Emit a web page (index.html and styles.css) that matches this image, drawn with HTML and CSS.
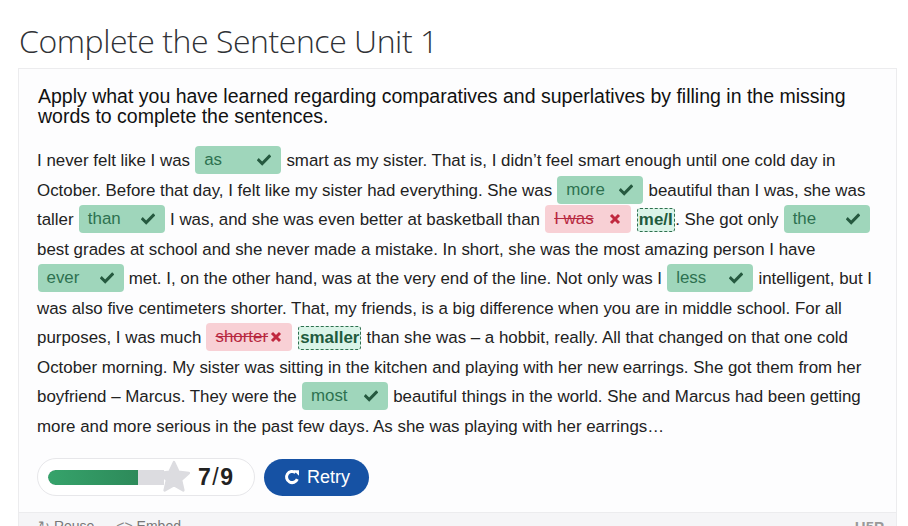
FILE: index.html
```html
<!DOCTYPE html>
<html lang="en">
<head>
<meta charset="utf-8">
<title>Complete the Sentence Unit 1</title>
<link rel="stylesheet" href="styles.css">
</head>
<body>
<h1 class="title">Complete the Sentence Unit 1</h1>
<div class="card">
  <div class="content">
    <div class="intro">Apply what you have learned regarding comparatives and superlatives by filling in the missing words to complete the sentences.</div>
    <p class="text">I never felt like I was <span class="drop ok"><span class="w">as</span><svg class="ic-check" viewBox="0 0 14 12"><polyline points="1.8,6.2 5.2,9.6 12.2,2.4"/></svg></span> smart as my sister. That is, I didn’t feel smart enough until one cold day in October. Before that day, I felt like my sister had everything. She was <span class="drop ok"><span class="w">more</span><svg class="ic-check" viewBox="0 0 14 12"><polyline points="1.8,6.2 5.2,9.6 12.2,2.4"/></svg></span> beautiful than I was, she was taller <span class="drop ok"><span class="w">than</span><svg class="ic-check" viewBox="0 0 14 12"><polyline points="1.8,6.2 5.2,9.6 12.2,2.4"/></svg></span> I was, and she was even better at basketball than <span class="drop bad"><span class="w">I was</span><svg class="ic-x" viewBox="0 0 12 12"><path d="M2 2 L10 10 M10 2 L2 10"/></svg></span> <span class="sol">me/I</span>. She got only <span class="drop ok"><span class="w">the</span><svg class="ic-check" viewBox="0 0 14 12"><polyline points="1.8,6.2 5.2,9.6 12.2,2.4"/></svg></span> best grades at school and she never made a mistake. In short, she was the most amazing person I have <span class="drop ok"><span class="w">ever</span><svg class="ic-check" viewBox="0 0 14 12"><polyline points="1.8,6.2 5.2,9.6 12.2,2.4"/></svg></span> met. I, on the other hand, was at the very end of the line. Not only was I <span class="drop ok"><span class="w">less</span><svg class="ic-check" viewBox="0 0 14 12"><polyline points="1.8,6.2 5.2,9.6 12.2,2.4"/></svg></span> intelligent, but I was also five centimeters shorter. That, my friends, is a big difference when you are in middle school. For all purposes, I was much <span class="drop bad"><span class="w">shorter</span><svg class="ic-x" viewBox="0 0 12 12"><path d="M2 2 L10 10 M10 2 L2 10"/></svg></span> <span class="sol">smaller</span> than she was – a hobbit, really. All that changed on that one cold October morning. My sister was sitting in the kitchen and playing with her new earrings. She got them from her boyfriend – Marcus. They were the <span class="drop ok"><span class="w">most</span><svg class="ic-check" viewBox="0 0 14 12"><polyline points="1.8,6.2 5.2,9.6 12.2,2.4"/></svg></span> beautiful things in the world. She and Marcus had been getting more and more serious in the past few days. As she was playing with her earrings…</p>
    <div class="actions">
      <div class="score">
        <div class="bar"><div class="fill" style="width:78%"></div></div>
        <svg class="star" viewBox="0 0 34 34"><polygon points="17,3 21.2,12.2 31,13.2 23.6,19.8 25.8,29.6 17,24.6 8.2,29.6 10.4,19.8 3,13.2 12.8,12.2"/></svg>
        <span class="num">7<span class="sl">/</span>9</span>
      </div>
      <button class="retry"><svg class="ic-redo" viewBox="0 0 16 16"><path class="arc" d="M13.3 10.2 A5.6 5.6 0 1 1 11.6 3.6"/><polygon points="9.4,1.2 15,1.2 15,6.8"/></svg>Retry</button>
    </div>
  </div>
  <div class="footer">
    <span class="fl"><span class="fi">↻</span> Reuse</span>
    <span class="fl"><span class="fi">&lt;&gt;</span> Embed</span>
    <span class="logo">H5P</span>
  </div>
</div>
</body>
</html>
```

FILE: styles.css
```css
html, body {
  margin: 0;
  padding: 0;
  background: #ffffff;
}
body {
  font-family: "Liberation Sans", Arial, sans-serif;
  color: #222;
  overflow: hidden;
}
.title {
  font-family: "Open Sans", "Liberation Sans", sans-serif;
  font-weight: 300;
  font-size: 32px;
  line-height: 40px;
  color: #303236;
  margin: 21px 0 7px 19px;
  letter-spacing: -0.45px;
}
.card {
  margin-left: 18px;
  width: 877px;
  border: 1px solid #ececee;
  background: #fdfdfe;
}
.content {
  padding: 18px 18px 16px 18px;
}
.intro {
  font-size: 19.5px;
  line-height: 19.5px;
  color: #111;
  margin-left: 1px;
}
.text {
  font-size: 16.9px;
  line-height: 29.5px;
  color: #222;
  margin: 20px 0 0 0;
}
.drop {
  display: inline-flex;
  align-items: center;
  justify-content: space-between;
  box-sizing: border-box;
  width: 86px;
  height: 28px;
  padding: 0 10px 0 9px;
  border-radius: 4px;
  vertical-align: middle;
  margin: -3px 0.5px 0 0.5px;
  line-height: 28px;
}
.drop.ok {
  background: #9fd6bb;
  color: #2d7150;
}
.drop.bad {
  background: #f8d0d5;
  color: #b72840;
}
.drop.bad .w {
  text-decoration: line-through;
}
.ic-check {
  width: 14px;
  height: 12px;
  fill: none;
  stroke: #25593f;
  stroke-width: 3;
  stroke-linecap: square;
}
.ic-x {
  width: 12px;
  height: 12px;
  fill: none;
  stroke: #c0283f;
  stroke-width: 3;
}
.sol {
  display: inline-block;
  border: 1px dashed #2d6f4e;
  border-radius: 3px;
  background: #daf4e8;
  color: #1f5a3d;
  font-weight: bold;
  padding: 0 1px;
  line-height: 22px;
  margin: 0 0.5px;
}
.actions {
  display: flex;
  align-items: center;
  gap: 9px;
  margin-top: 17px;
}
.score {
  display: flex;
  align-items: center;
  box-sizing: border-box;
  width: 218px;
  height: 38px;
  border: 1px solid #e7e7ea;
  border-radius: 19px;
  background: #fff;
  padding: 0 0 0 10px;
}
.bar {
  width: 116px;
  height: 15px;
  background: #dcdce0;
  border-radius: 8px 0 0 8px;
  overflow: hidden;
}
.fill {
  height: 100%;
  background: linear-gradient(90deg, #36a36b, #2d8a5a);
  border-radius: 8px 0 0 8px;
}
.star {
  width: 36px;
  height: 36px;
  margin-left: -8px;
  fill: #dcdce0;
  stroke: #dcdce0;
  stroke-width: 2.5;
  stroke-linejoin: round;
}
.num {
  font-size: 23px;
  font-weight: bold;
  color: #222;
  margin-left: 6px;
  letter-spacing: 0.5px;
}
.sl {
  font-weight: normal;
  margin: 0 1px;
}
.retry {
  display: inline-flex;
  align-items: center;
  gap: 7px;
  height: 37px;
  padding: 0 19px 0 20px;
  border: none;
  border-radius: 19px;
  background: #1652a4;
  color: #fff;
  font-family: "Liberation Sans", Arial, sans-serif;
  font-size: 18px;
}
.ic-redo {
  width: 16px;
  height: 16px;
}
.ic-redo .arc {
  fill: none;
  stroke: #fff;
  stroke-width: 3;
}
.ic-redo polygon {
  fill: #fff;
}
.footer {
  display: flex;
  align-items: flex-start;
  gap: 22px;
  height: 30px;
  background: #f5f5f7;
  border-top: 1px solid #ececee;
  padding: 5px 12px 0 19px;
  font-size: 14px;
  color: #777;
}
.fi {
  color: #888;
}
.logo {
  margin-left: auto;
  font-weight: bold;
  color: #999;
  font-size: 15px;
}
```
